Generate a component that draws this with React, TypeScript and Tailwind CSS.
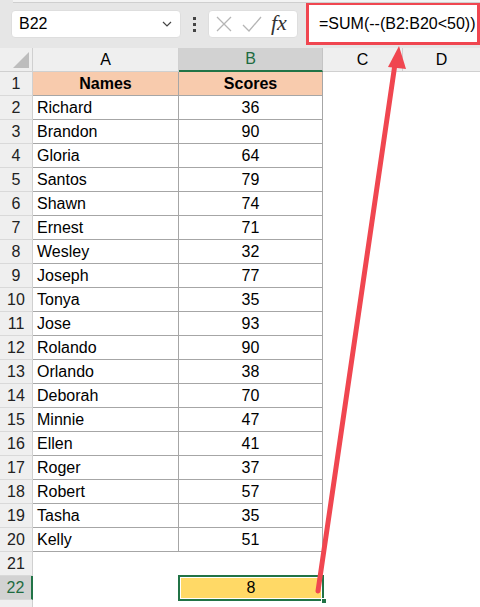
import React from 'react';

const rows: [string, number][] = [
  ['Richard', 36],
  ['Brandon', 90],
  ['Gloria', 64],
  ['Santos', 79],
  ['Shawn', 74],
  ['Ernest', 71],
  ['Wesley', 32],
  ['Joseph', 77],
  ['Tonya', 35],
  ['Jose', 93],
  ['Rolando', 90],
  ['Orlando', 38],
  ['Deborah', 70],
  ['Minnie', 47],
  ['Ellen', 41],
  ['Roger', 37],
  ['Robert', 57],
  ['Tasha', 35],
  ['Kelly', 51],
];

const font = { fontFamily: '"Liberation Sans", Arial, sans-serif' };

const RowHead: React.FC<{ n?: number; active?: boolean }> = ({ n, active }) => (
  <div
    className={`h-6 flex items-center justify-center text-[16px] border-b border-[#d9d9d9] ${
      active ? 'bg-[#d2d2d2] text-[#1e6b41] border-r-2 border-r-[#217346]' : 'bg-[#efefef] text-[#222] border-r border-r-[#d0d0d0]'
    }`}
  >
    {n}
  </div>
);

export default function App() {
  return (
    <div className="relative w-[480px] h-[607px] bg-white overflow-hidden text-black" style={font}>
      {/* Formula bar */}
      <div className="h-12 bg-[#e6e6e6] relative">
        <div className="absolute left-[13px] right-0 top-0 h-[3px] bg-[#f3f3f3] border-b border-[#cfcfcf]" />
        <div className="flex items-center h-12 pl-[11px]">
          <div className="w-[170px] h-7 bg-white rounded-[4px] border border-[#dedede] flex items-center justify-between pl-[7px] pr-[8px]">
            <span className="text-[16px]">B22</span>
            <svg width="10" height="6" viewBox="0 0 10 6">
              <path d="M1 1 L5 5 L9 1" fill="none" stroke="#444" strokeWidth="1.2" />
            </svg>
          </div>
          <div className="w-[27px] flex flex-col items-center gap-[3px]">
            <span className="w-[3px] h-[3px] bg-[#444]" />
            <span className="w-[3px] h-[3px] bg-[#444]" />
            <span className="w-[3px] h-[3px] bg-[#444]" />
          </div>
          <div className="w-[90px] h-7 bg-white rounded-[4px] border border-[#dedede] flex items-center pl-[6px] gap-[9px]">
            <svg width="18" height="16" viewBox="0 0 18 16">
              <path d="M2 1 L16 15 M16 1 L2 15" stroke="#b5b5b5" strokeWidth="1.3" fill="none" />
            </svg>
            <svg width="20" height="16" viewBox="0 0 20 16">
              <path d="M1 9 L7 15 L19 1" stroke="#b5b5b5" strokeWidth="1.3" fill="none" />
            </svg>
            <span className="text-[22px] italic text-[#333] leading-none -mt-[3px]" style={{ fontFamily: '"Liberation Serif", serif' }}>
              fx
            </span>
          </div>
          <div className="ml-[8px] w-[174px] h-[43px] -mt-[1px] bg-white border-[3px] border-[#f04650] flex items-center pl-[10px]">
            <span className="text-[16px]">=SUM(--(B2:B20&lt;50))</span>
          </div>
        </div>
      </div>

      {/* Grid */}
      <div className="grid grid-cols-[33px_146px_144px_80px_77px]">
        {/* Column header row */}
        <div className="h-6 bg-[#efefef] border-b border-r border-[#d0d0d0] relative">
          <svg className="absolute right-[3px] bottom-[3px]" width="16" height="16" viewBox="0 0 16 16">
            <path d="M16 0 L16 16 L0 16 Z" fill="#bdbdbd" />
          </svg>
        </div>
        <div className="h-6 bg-[#efefef] border-b border-r border-[#d0d0d0] flex items-center justify-center text-[16px]">A</div>
        <div className="h-6 bg-[#d2d2d2] border-b-2 border-b-[#217346] border-r border-[#c4c4c4] flex items-center justify-center text-[16px] text-[#1e6b41]">B</div>
        <div className="h-6 bg-[#efefef] border-b border-r border-[#d0d0d0] flex items-center justify-center text-[16px]">C</div>
        <div className="h-6 bg-[#efefef] border-b border-[#d0d0d0] flex items-center justify-center text-[16px]">D</div>

        {/* Row 1 */}
        <RowHead n={1} />
        <div className="h-6 bg-[#f8cbad] border-r border-b border-[#a6a6a6] flex items-center justify-center font-bold text-[16px]">Names</div>
        <div className="h-6 bg-[#f8cbad] border-r border-b border-[#a6a6a6] flex items-center justify-center font-bold text-[16px]">Scores</div>
        <div className="h-6" />
        <div className="h-6" />

        {rows.map(([name, score], i) => (
          <React.Fragment key={name + i}>
            <RowHead n={i + 2} />
            <div className="h-6 border-r border-b border-[#a6a6a6] flex items-center pl-[4px] text-[16px]">{name}</div>
            <div className="h-6 border-r border-b border-[#a6a6a6] flex items-center justify-center text-[16px]">{score}</div>
            <div className="h-6" />
            <div className="h-6" />
          </React.Fragment>
        ))}

        <RowHead n={21} />
        <div className="h-6 col-span-4" />

        <RowHead n={22} active />
        <div className="h-6" />
        <div className="h-6 relative">
          <div className="absolute -left-[1px] -top-[1px] -right-[1px] -bottom-[1px] border-2 border-[#217346] bg-[#ffd966] flex items-center justify-center text-[16px]">
            <div className="absolute inset-0 border border-white" />
            <span className="relative">8</span>
          </div>
          <div className="absolute -right-[4px] -bottom-[4px] w-[6px] h-[6px] bg-[#217346] border border-white" />
        </div>
        <div className="h-6" />
        <div className="h-6" />

        <RowHead />
        <div className="h-6 col-span-4" />
      </div>

      {/* Callout arrow */}
      <svg className="absolute inset-0 pointer-events-none" width="480" height="607" viewBox="0 0 480 607">
        <line x1="318" y1="591" x2="395" y2="64" stroke="#f04650" strokeWidth="5" strokeLinecap="round" />
        <polygon points="399,46 388,67 406,69" fill="#f04650" />
      </svg>
    </div>
  );
}
